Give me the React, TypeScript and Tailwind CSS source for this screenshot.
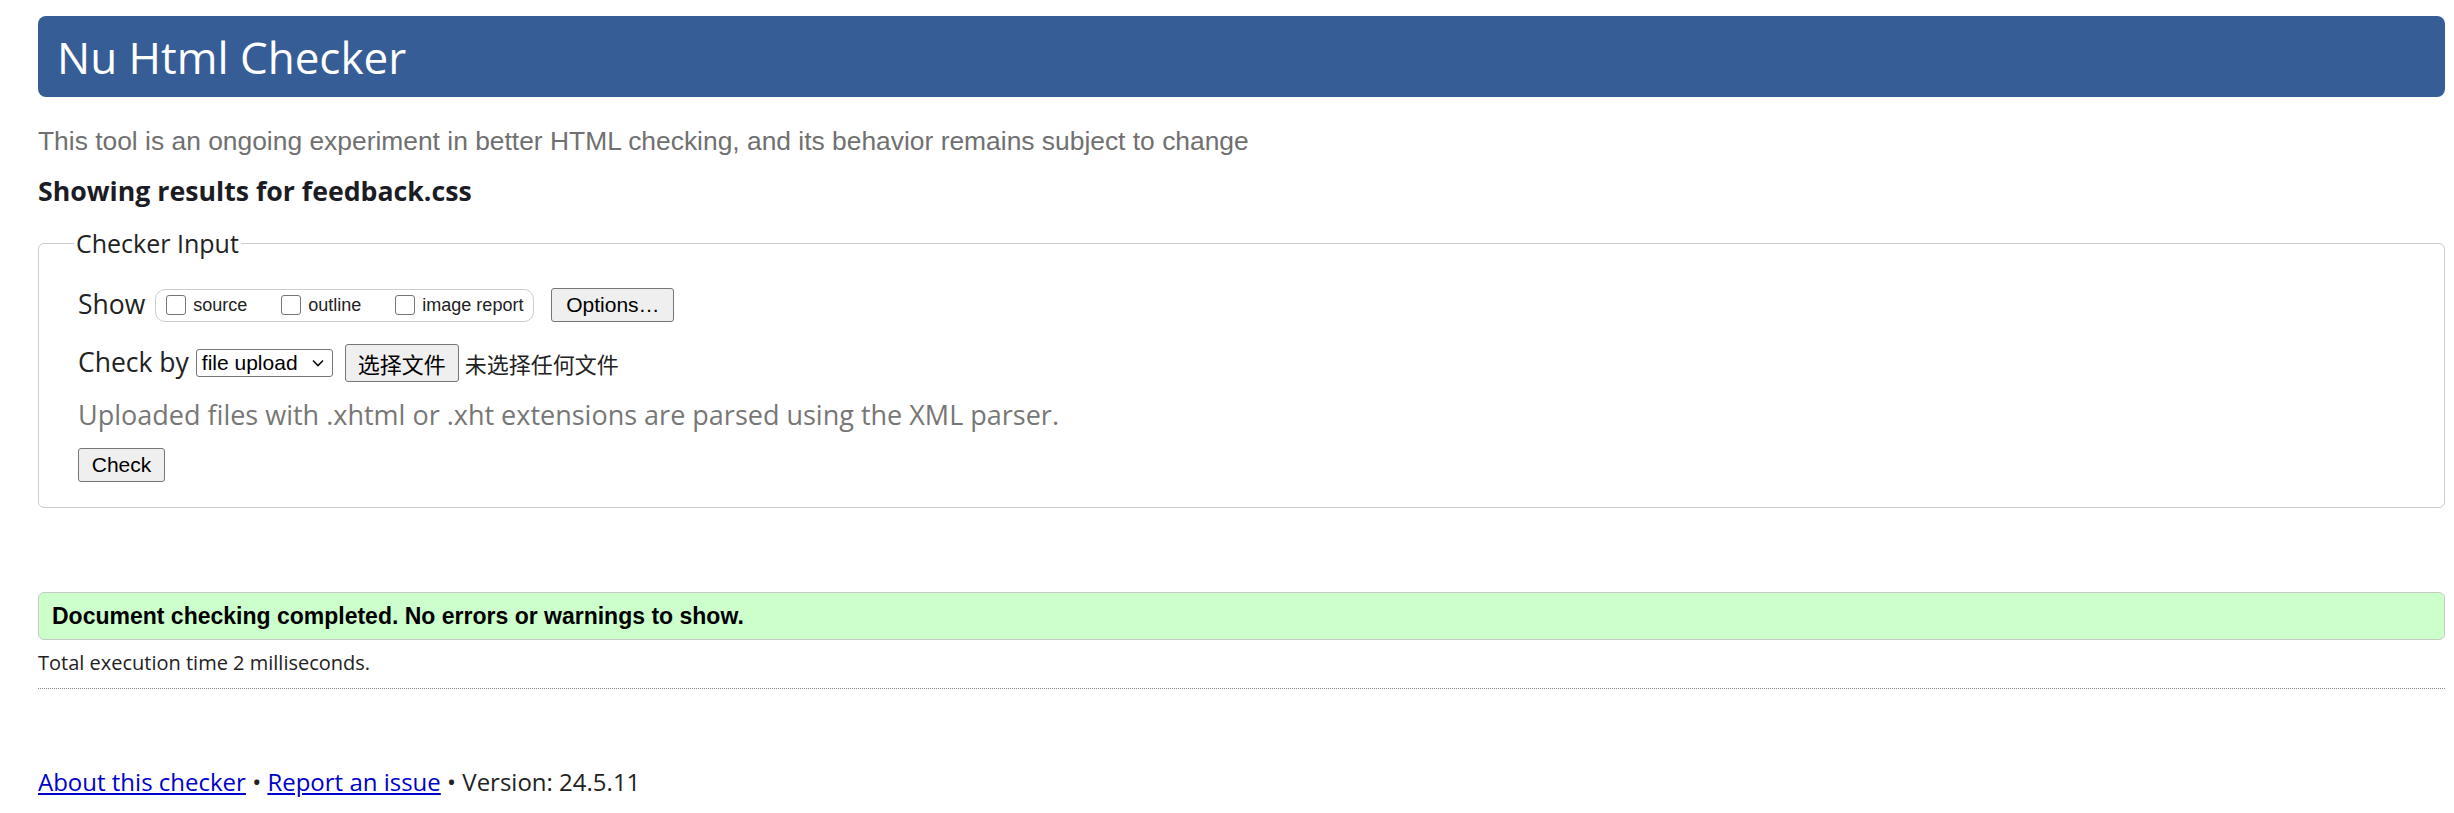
import { FC } from "react";

const seg = "font-['Open_Sans',sans-serif]";
const arial = "font-['Liberation_Sans',Arial,sans-serif]";
const cjk = "font-['Noto_Sans_CJK_SC',sans-serif]";

const Box: FC<{ label: string }> = ({ label }) => {
  return (
    <label className="flex items-center gap-[7px]">
      <span className="h-[20px] w-[20px] rounded-[3px] border border-[#767676] bg-white" />
      <span className={`${arial} text-[18px] text-[#222]`}>{label}</span>
    </label>
  );
};

const App: FC = () => {
  return (
    <div className="min-h-[813px] bg-white pl-[38px] pr-[9px] pt-[16px]">
      <h1
        className={`${seg} flex h-[81px] items-center rounded-[8px] bg-[#365d95] pl-[19px] text-[44px] font-normal text-white`}
      >
        Nu Html Checker
      </h1>

      <p className={`${arial} mt-[29px] text-[26.4px] leading-[30px] text-[#707070]`}>
        This tool is an ongoing experiment in better HTML checking, and its
        behavior remains subject to change
      </p>

      <h2 className={`${seg} mt-[18px] text-[26.7px] font-bold leading-[34px] text-[#1c1c24]`}>
        Showing results for feedback.css
      </h2>

      <fieldset className="mt-[20px] rounded-[6px] border border-[#cccccc] px-[35px] pb-[25px]">
        <legend className={`${seg} px-[2px] text-[25px] leading-[30px] text-[#222]`}>
          Checker Input
        </legend>

        <div className="ml-[4px] mt-[30px] flex h-[34px] items-center">
          <span className={`${seg} text-[26.5px] text-[#222]`}>Show</span>
          <div className="ml-[10px] flex h-[33px] items-center gap-[34px] rounded-[10px] border border-[#cccccc] pl-[10px] pr-[10px]">
            <Box label="source" />
            <Box label="outline" />
            <Box label="image report" />
          </div>
          <button
            className={`${arial} ml-[17px] h-[34px] w-[123px] rounded-[3px] border border-[#767676] bg-[#efefef] text-[21px] text-black`}
          >
            Options…
          </button>
        </div>

        <div className="ml-[4px] mt-[22px] flex h-[38px] items-center">
          <span className={`${seg} text-[26.5px] text-[#222]`}>Check by</span>
          <div
            className={`${arial} ml-[7px] flex h-[28px] w-[137px] items-center justify-between rounded-[3px] border border-[#767676] bg-white pl-[5px] pr-[8px] text-[21px] text-black`}
          >
            <span>file upload</span>
            <svg width="12" height="8" viewBox="0 0 12 8" fill="none">
              <path d="M1 1.5l5 5 5-5" stroke="#111" strokeWidth="1.6" />
            </svg>
          </div>
          <button
            className={`${cjk} ml-[12px] h-[38px] w-[114px] rounded-[3px] border border-[#767676] bg-[#efefef] text-[22px] text-black`}
          >
            选择文件
          </button>
          <span className={`${cjk} ml-[6px] text-[22px] text-[#222]`}>未选择任何文件</span>
        </div>

        <p className={`${seg} ml-[4px] mt-[18px] text-[27px] leading-[30px] text-[#777]`}>
          Uploaded files with .xhtml or .xht extensions are parsed using the XML
          parser.
        </p>

        <button
          className={`${arial} ml-[4px] mt-[18px] block h-[34px] w-[87px] rounded-[3px] border border-[#767676] bg-[#efefef] text-[21px] text-black`}
        >
          Check
        </button>
      </fieldset>

      <div
        className={`${arial} mt-[84px] flex h-[48px] items-center rounded-[6px] border border-[#c4ccc4] bg-[#ccffcc] pl-[13px] text-[23px] font-bold text-black`}
      >
        Document checking completed. No errors or warnings to show.
      </div>

      <p className={`${seg} mt-[10px] text-[20px] leading-[26px] text-[#222]`}>
        Total execution time 2 milliseconds.
      </p>

      <hr className="mt-[12px] border-0 border-t border-dotted border-[#888]" />

      <p className={`${seg} mt-[77px] text-[24px] leading-[32px] text-[#222]`}>
        <a href="#" className="text-[#0000cc] underline">
          About this checker
        </a>{" "}
        •{" "}
        <a href="#" className="text-[#0000cc] underline">
          Report an issue
        </a>{" "}
        • Version: 24.5.11
      </p>
    </div>
  );
};

export default App;
